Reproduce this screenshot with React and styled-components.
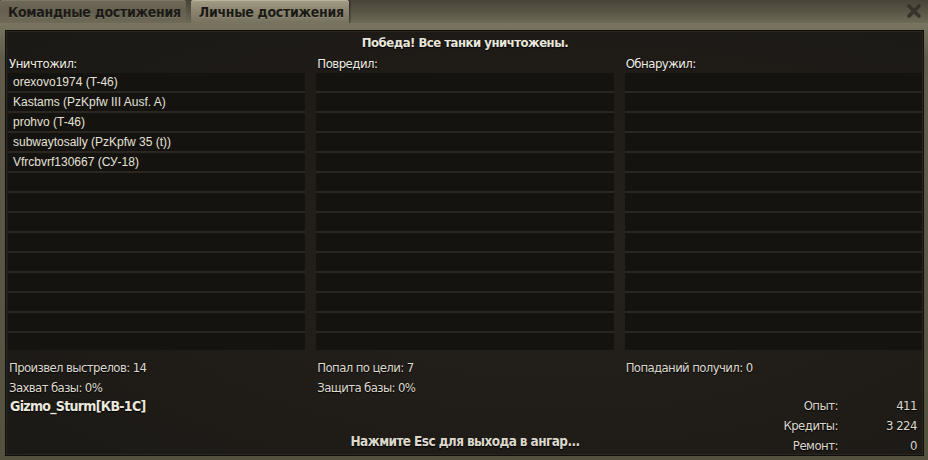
import React from 'react';
import styled, { createGlobalStyle } from 'styled-components';

const narrow = `"Liberation Sans Narrow", "DejaVu Sans Condensed", "Liberation Sans", sans-serif`;

const GlobalStyle = createGlobalStyle`
  html, body {
    margin: 0;
    padding: 0;
    background: #3b382f;
  }
  * { box-sizing: border-box; }
`;

const killed = [
  'orexovo1974 (T-46)',
  'Kastams (PzKpfw III Ausf. A)',
  'prohvo (T-46)',
  'subwaytosally (PzKpfw 35 (t))',
  'Vfrcbvrf130667 (СУ-18)',
];

const ROWS = 14;

export default function App() {
  const columns = [
    { title: 'Уничтожил:', items: killed },
    { title: 'Повредил:', items: [] },
    { title: 'Обнаружил:', items: [] },
  ];

  return (
    <>
      <GlobalStyle />
      <SWindow>
        <SHeader>
          <STabs>
            <STab>Командные достижения</STab>
            <STab $active>Личные достижения</STab>
          </STabs>
          <SClose aria-label="close">
            <svg width="16" height="16" viewBox="0 0 16 16">
              <path d="M3 3 L13 13 M13 3 L3 13" stroke="#36332b" strokeWidth="3.6" strokeLinecap="round" />
            </svg>
          </SClose>
        </SHeader>
        <SFrame>
          <SPanel>
            <STitle>Победа! Все танки уничтожены.</STitle>
            <SColumns>
              {columns.map((col) => (
                <SColumn key={col.title}>
                  <SLabel>{col.title}</SLabel>
                  <SList>
                    {Array.from({ length: ROWS }).map((_, i) => (
                      <SRow key={i}>{col.items[i] || ''}</SRow>
                    ))}
                  </SList>
                </SColumn>
              ))}
            </SColumns>
            <SStats>
              <SStat>Произвел выстрелов: 14</SStat>
              <SStat>Попал по цели: 7</SStat>
              <SStat>Попаданий получил: 0</SStat>
              <SStat>Захват базы: 0%</SStat>
              <SStat>Защита базы: 0%</SStat>
              <SStat />
            </SStats>
            <SFooter>
              <SName>Gizmo_Sturm[КВ-1С]</SName>
              <SHint>Нажмите Esc для выхода в ангар...</SHint>
              <SResult>
                <SResLabel>Опыт:</SResLabel>
                <SResValue>411</SResValue>
                <SResLabel>Кредиты:</SResLabel>
                <SResValue>3 224</SResValue>
                <SResLabel>Ремонт:</SResLabel>
                <SResValue>0</SResValue>
              </SResult>
            </SFooter>
          </SPanel>
        </SFrame>
      </SWindow>
    </>
  );
}

const SWindow = styled.div`
  width: 928px;
  height: 460px;
  display: flex;
  flex-direction: column;
  background: #4f4b3f;
  overflow: hidden;
`;

const SHeader = styled.div`
  height: 23px;
  display: flex;
  justify-content: space-between;
  align-items: flex-start;
  background: linear-gradient(180deg, #48443a 0%, #5b5747 55%, #6f6a57 100%);
`;

const STabs = styled.div`
  display: flex;
  gap: 5px;
  height: 23px;
`;

const STab = styled.div`
  height: 23px;
  padding: 1px 5px 0 8px;
  display: flex;
  align-items: center;
  font-family: ${narrow};
  font-weight: bold;
  font-size: 14px;
  letter-spacing: -0.3px;
  color: #1b1a16;
  text-shadow: 0 1px 0 rgba(255, 255, 240, 0.15);
  border-radius: 3px 3px 0 0;
  background: ${(p) =>
    p.$active
      ? 'linear-gradient(180deg, #a39d86 0%, #8c8670 45%, #777260 100%)'
      : 'linear-gradient(180deg, #6d6857 0%, #645f4f 50%, #6f6a58 100%)'};
  box-shadow: ${(p) =>
    p.$active ? 'inset 0 1px 0 #b9b39b, 1px 0 2px rgba(0,0,0,0.5)' : 'inset 0 1px 0 #7d7866'};
`;

const SClose = styled.div`
  width: 16px;
  height: 16px;
  margin: 3px 6px 0 0;
  display: flex;
`;

const SFrame = styled.div`
  flex: 1;
  padding: 7px 4px 5px 5px;
  background: linear-gradient(180deg, #7a7561 0%, #5f5a4a 8%, #55513f 100%);
  display: flex;
`;

const SPanel = styled.div`
  flex: 1;
  display: flex;
  flex-direction: column;
  padding: 0 1px 0 2px;
  background: radial-gradient(ellipse at 60% 55%, #25221d 0%, #1f1c18 60%, #1b1915 100%);
  border: 1px solid #0f0e0c;
  box-shadow: inset 0 0 0 1px #2a2721;
`;

const STitle = styled.div`
  height: 22px;
  display: flex;
  align-items: center;
  justify-content: center;
  font-family: ${narrow};
  font-weight: bold;
  font-size: 13px;
  letter-spacing: -0.5px;
  color: #e9e6dc;
  text-shadow: 0 1px 1px #000;
`;

const SColumns = styled.div`
  display: grid;
  grid-template-columns: 1fr 1fr 1fr;
  gap: 11px;
`;

const SColumn = styled.div`
  display: flex;
  flex-direction: column;
`;

const SLabel = styled.div`
  height: 20px;
  display: flex;
  align-items: center;
  padding-left: 1px;
  font-family: ${narrow};
  font-size: 13px;
  letter-spacing: -0.5px;
  color: #f0ede4;
  text-shadow: 0 1px 1px #000;
`;

const SList = styled.div`
  height: 277px;
  overflow: hidden;
  background: #2a2721;
  display: flex;
  flex-direction: column;
  gap: 2px;
`;

const SRow = styled.div`
  flex: 0 0 18px;
  padding-left: 5px;
  display: flex;
  align-items: center;
  background: #15130f;
  font-family: "Liberation Sans", Arial, sans-serif;
  font-size: 12px;
  color: #e4e1d8;
  white-space: nowrap;
`;

const SStats = styled.div`
  display: grid;
  grid-template-columns: 1fr 1fr 1fr;
  column-gap: 11px;
  padding-top: 7px;
`;

const SStat = styled.div`
  height: 20px;
  display: flex;
  align-items: center;
  padding-left: 1px;
  font-family: ${narrow};
  font-size: 13px;
  letter-spacing: -0.6px;
  color: #ddd9ce;
  text-shadow: 0 1px 1px #000;
`;

const SFooter = styled.div`
  flex: 1;
  display: grid;
  grid-template-columns: 1fr 1fr 1fr;
  column-gap: 11px;
`;

const SName = styled.div`
  height: 18px;
  padding-left: 2px;
  display: flex;
  align-items: center;
  font-family: ${narrow};
  font-weight: bold;
  font-size: 14px;
  letter-spacing: -0.7px;
  color: #ebe8de;
  text-shadow: 0 1px 1px #000;
`;

const SHint = styled.div`
  align-self: end;
  margin-bottom: 6px;
  text-align: center;
  white-space: nowrap;
  font-family: ${narrow};
  font-weight: bold;
  font-size: 13.5px;
  letter-spacing: -0.6px;
  color: #dcd8cc;
  text-shadow: 0 1px 1px #000;
`;

const SResult = styled.div`
  display: grid;
  grid-template-columns: 1fr 79px;
  grid-auto-rows: 20px;
  padding-right: 5px;
  margin-top: -2px;
`;

const SResLabel = styled.div`
  display: flex;
  align-items: center;
  justify-content: flex-end;
  font-family: ${narrow};
  font-size: 13px;
  letter-spacing: -0.5px;
  color: #ddd9ce;
  text-shadow: 0 1px 1px #000;
`;

const SResValue = styled(SResLabel)``;
